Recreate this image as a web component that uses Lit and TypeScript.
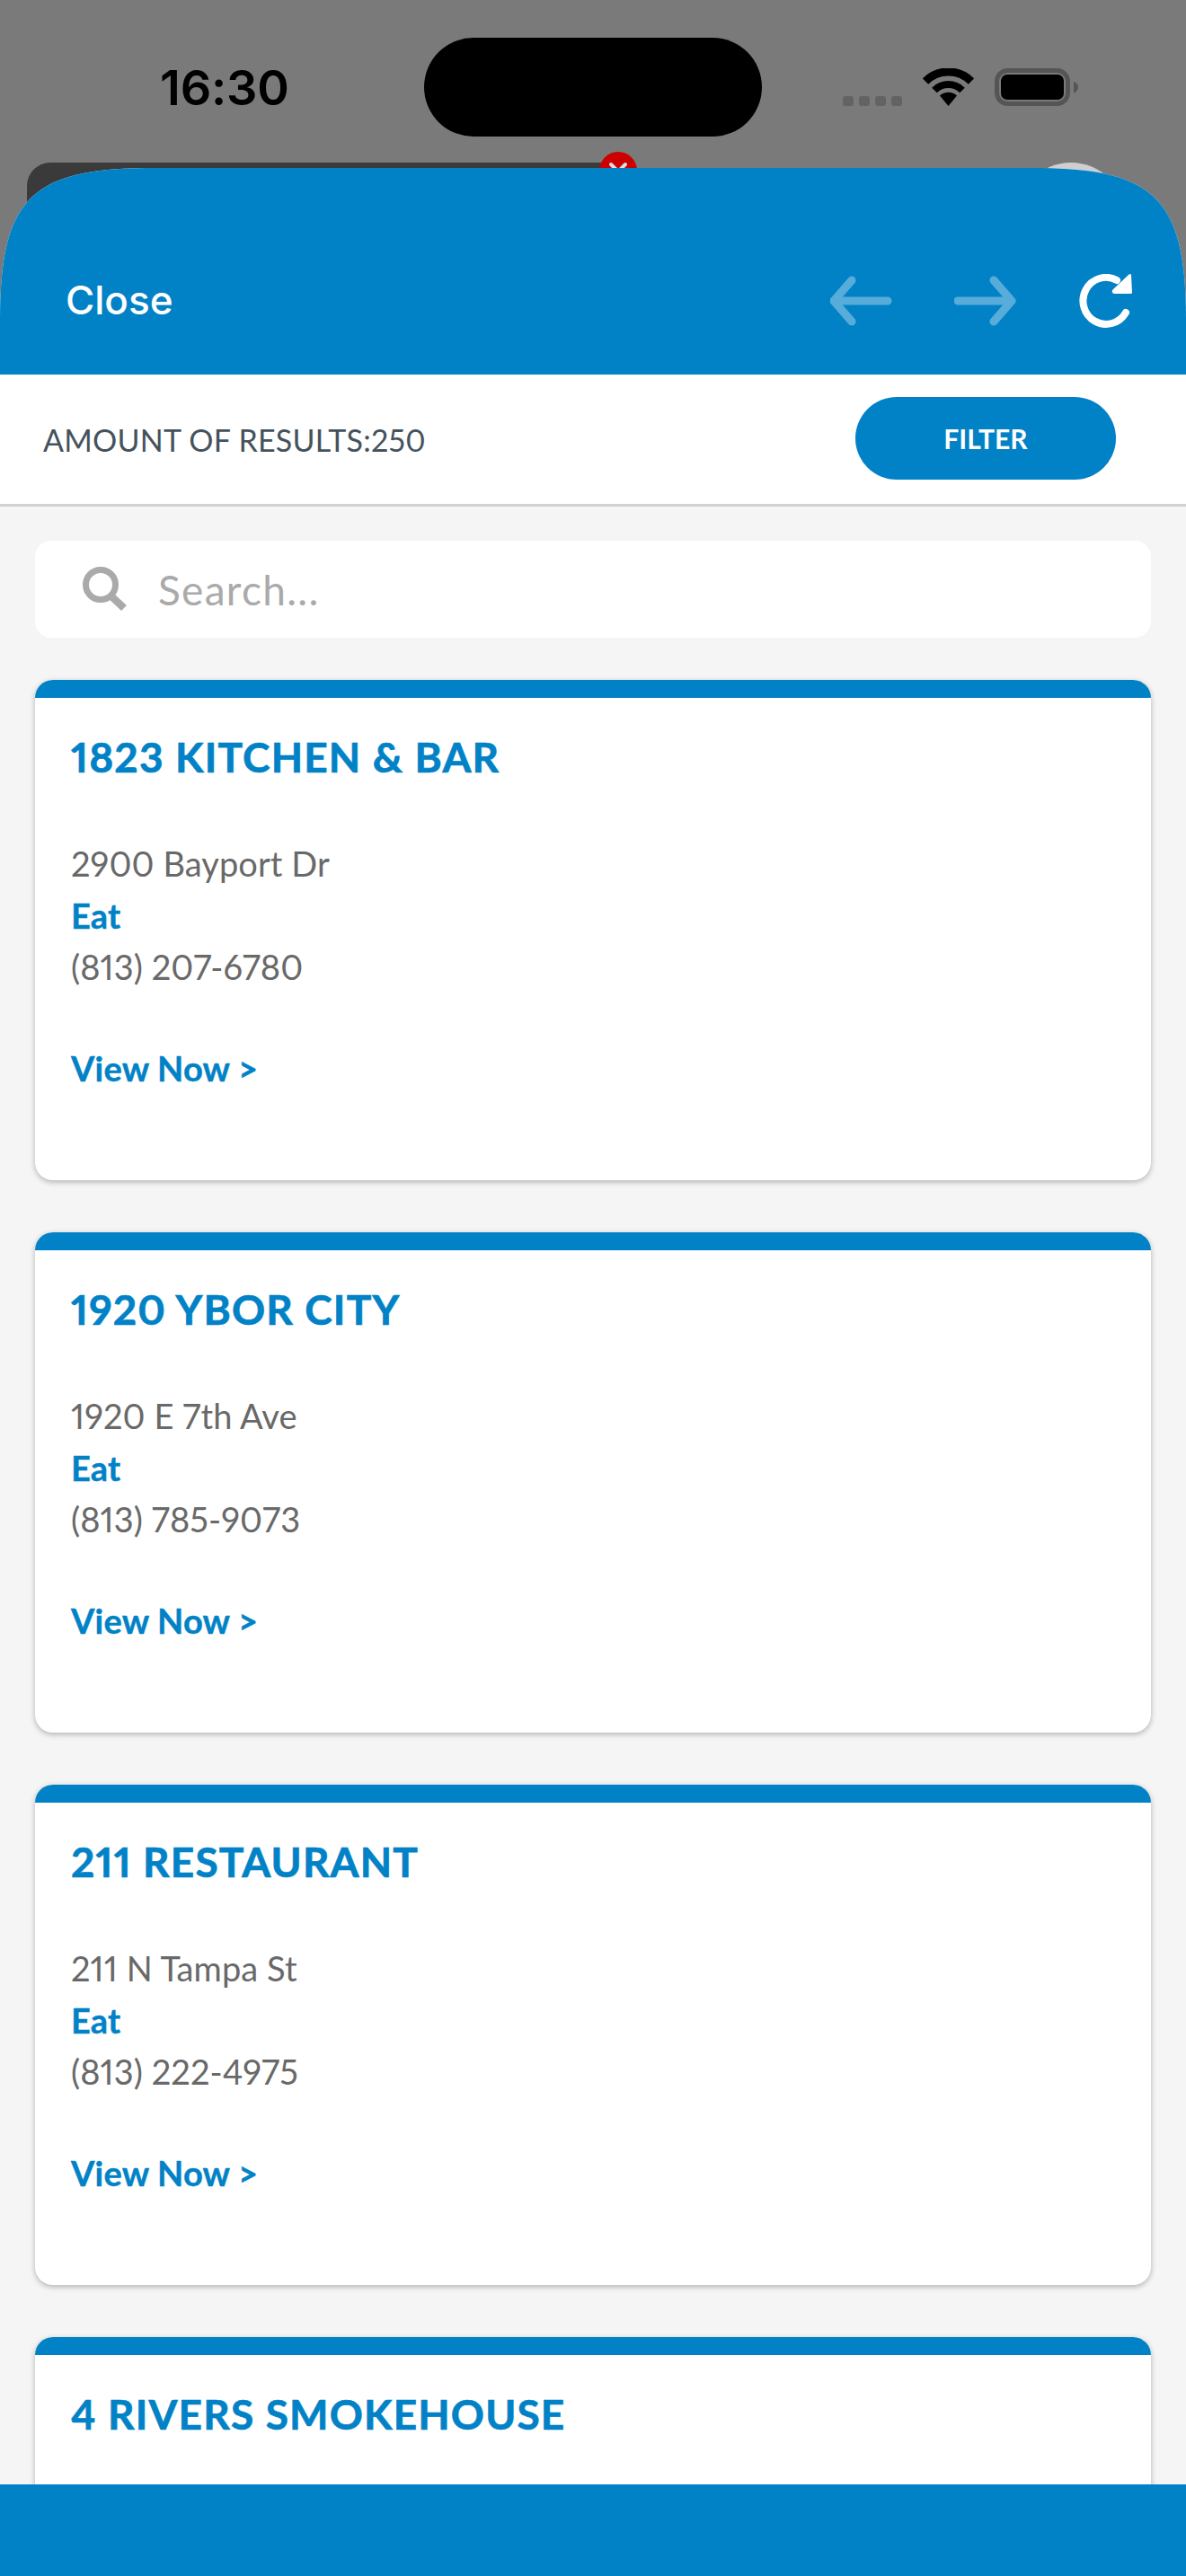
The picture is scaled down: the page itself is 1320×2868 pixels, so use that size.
import { LitElement, html, css } from "lit";
import { customElement } from "lit/decorators.js";

const places = [
  { name: "1823 KITCHEN & BAR", addr: "2900 Bayport Dr", kind: "Eat", phone: "(813) 207-6780" },
  { name: "1920 YBOR CITY", addr: "1920 E 7th Ave", kind: "Eat", phone: "(813) 785-9073" },
  { name: "211 RESTAURANT", addr: "211 N Tampa St", kind: "Eat", phone: "(813) 222-4975" },
  { name: "4 RIVERS SMOKEHOUSE", addr: "", kind: "", phone: "" },
];

@customElement("app-root")
export class AppRoot extends LitElement {
  static styles = css`
    :host { display: block; width: 1320px; height: 2868px; position: relative; overflow: hidden; background: #7a7a7a; font-family: "Lato", "Liberation Sans", sans-serif; font-feature-settings: "pnum"; }
    .behind-card { position: absolute; left: 30px; top: 181px; width: 660px; height: 120px; background: #3a3a3a; border-radius: 26px 0 0 0; }
    .behind-badge { position: absolute; left: 666px; top: 168px; width: 44px; height: 44px; }
    .behind-avatar { position: absolute; left: 1132px; top: 181px; width: 120px; height: 120px; border-radius: 50%; background: #cfcfcf; }
    .status { position: relative; height: 187px; box-sizing: border-box; display: grid; grid-template-columns: 472px 376px 1fr; }
    .time { font-family: "Inter", sans-serif; font-weight: 600; font-size: 54px; line-height: 60px; color: #000; padding: 68px 0 0 178px; letter-spacing: -0.2px; }
    .island { margin-top: 42px; height: 110px; background: #000; border-radius: 55px; }
    .sys { display: flex; align-items: flex-start; padding: 76px 0 0 90px; }
    .dots { display: flex; gap: 6px; margin-top: 31px; }
    .dots i { width: 12px; height: 11px; border-radius: 3px; background: #636363; display: block; }
    .wifi { margin-left: 23px; display: block; }
    .battery { margin-left: 23px; display: block; }
    .panel { position: relative; height: 2681px; display: flex; flex-direction: column; background: #f5f5f5; clip-path: path("M0 170 C0 34 34 0 170 0 L1150 0 C1286 0 1320 34 1320 170 L1320 2681 L0 2681 Z"); }
    .head { height: 230px; flex: none; background: #0282c6; display: flex; align-items: flex-start; justify-content: space-between; box-sizing: border-box; padding: 113px 60px 0 73px; }
    .close { font-family: "Inter", sans-serif; font-weight: 500; font-size: 44px; line-height: 54px; color: #fff; margin-top: 7px; }
    .nav { display: flex; margin-top: 5px; }
    .nav svg { display: block; }
    .nav .gap { margin-right: 62px; }
    .bar { height: 147px; flex: none; box-sizing: border-box; background: #fff; border-bottom: 3px solid #d2d2d2; display: flex; align-items: center; justify-content: space-between; padding: 0 78px 0 48px; }
    .count { font-size: 34px; line-height: 40px; color: #45525c; letter-spacing: .25px; margin-top: 2px; }
    .filter { width: 290px; height: 92px; border-radius: 46px; background: #0282c6; color: #fff; font-weight: 700; font-size: 30px; display: flex; align-items: center; justify-content: center; margin-bottom: 2px; }
    .list { flex: 1; min-height: 0; overflow: hidden; padding: 38px 39px 0; display: flex; flex-direction: column; }
    .search { flex: none; height: 108px; border-radius: 18px; background: #fff; display: flex; align-items: center; padding-left: 53px; gap: 34px; color: #aaa; font-size: 46px; letter-spacing: 1.3px; }
    .search svg { display: block; }
    .card { flex: none; position: relative; margin-top: 47px; height: 557px; margin-bottom: 11px; background: #fff; border-radius: 20px; box-shadow: 0 2px 6px rgba(0,0,0,.28); overflow: hidden; }
    .strip { height: 20px; background: #0282c6; }
    .body { padding: 38px 40px 0; }
    .title { font-weight: 700; font-size: 46px; line-height: 56px; color: #0282c6; letter-spacing: 1.15px; -webkit-text-stroke: .7px #0282c6; }
    .rows { margin-top: 62px; font-size: 38px; line-height: 57.5px; color: #696969; letter-spacing: .08px; }
    .kind { font-weight: 700; color: #0282c6; -webkit-text-stroke: .4px #0282c6; }
    .view { margin-top: 55px; font-weight: 700; font-size: 38px; line-height: 57px; color: #0282c6; letter-spacing: .2px; -webkit-text-stroke: .4px #0282c6; }
    .foot { flex: none; height: 102px; background: #0282c6; }
  `;

  render() {
    return html`
      <div class="behind-card"></div>
      <div class="behind-avatar"></div>
      <svg class="behind-badge" viewBox="0 0 44 44"><circle cx="22" cy="22" r="21" fill="#cc0000"/><path d="M14 15 L30 31 M30 15 L14 31" stroke="#ddd" stroke-width="4" stroke-linecap="round"/></svg>
      <div class="status">
        <div class="time">16:30</div>
        <div class="island"></div>
        <div class="sys">
          <div class="dots"><i></i><i></i><i></i><i></i></div>
          <svg class="wifi" width="57" height="42" viewBox="0 0 57 42">
            <path d="M3 14.5 A36 36 0 0 1 54 14.5" fill="none" stroke="#000" stroke-width="9"/>
            <path d="M13 24.5 A22 22 0 0 1 44 24.5" fill="none" stroke="#000" stroke-width="8"/>
            <path d="M28.5 42 L19 30.5 A14 14 0 0 1 38 30.5 Z" fill="#000"/>
          </svg>
          <svg class="battery" width="94" height="42" viewBox="0 0 94 42">
            <rect x="2.5" y="2.5" width="79" height="37" rx="12" fill="none" stroke="#555" stroke-width="5"/>
            <rect x="7" y="7" width="70" height="28" rx="7" fill="#000"/>
            <path d="M88 15 C91 16 93 18 93 21 C93 24 91 26 88 28 Z" fill="#555"/>
          </svg>
        </div>
      </div>
      <div class="panel">
        <div class="head">
          <div class="close">Close</div>
          <div class="nav">
            <svg class="gap" width="76" height="60" viewBox="0 0 76 60"><path d="M72 30 H12 M32 7 L12 30 L32 53" transform="translate(-8 0)" fill="none" stroke="#fff" stroke-opacity=".34" stroke-width="9" stroke-linecap="round" stroke-linejoin="round"/></svg>
            <svg class="gap" width="76" height="60" viewBox="0 0 76 60"><path d="M4 30 H64 M44 7 L64 30 L44 53" fill="none" stroke="#fff" stroke-opacity=".34" stroke-width="9" stroke-linecap="round" stroke-linejoin="round"/></svg>
            <svg width="60" height="60" viewBox="0 0 60 60">
              <path d="M53 43 A25.5 26 0 1 1 43 7" fill="none" stroke="#fff" stroke-width="8" stroke-linecap="round"/>
              <path d="M59 1 L60 21 Q60 22 58 22 L40 22 Q36 20 39 17 L56 1 Q58 -1 59 1 Z" fill="#fff"/>
            </svg>
          </div>
        </div>
        <div class="bar">
          <div class="count">AMOUNT OF RESULTS:250</div>
          <div class="filter">FILTER</div>
        </div>
        <div class="list">
          <div class="search">
            <svg width="50" height="50" viewBox="0 0 50 50"><circle cx="20" cy="20" r="16.5" fill="none" stroke="#aaa" stroke-width="7"/><path d="M31 32 L46 46" stroke="#aaa" stroke-width="8.5"/></svg>
            <span>Search...</span>
          </div>
          ${places.map(p => html`
            <div class="card">
              <div class="strip"></div>
              <div class="body">
                <div class="title">${p.name}</div>
                ${p.addr ? html`
                  <div class="rows"><div>${p.addr}</div><div class="kind">${p.kind}</div><div>${p.phone}</div></div>
                  <div class="view">View Now &gt;</div>` : ""}
              </div>
            </div>`)}
        </div>
        <div class="foot"></div>
      </div>
    `;
  }
}
